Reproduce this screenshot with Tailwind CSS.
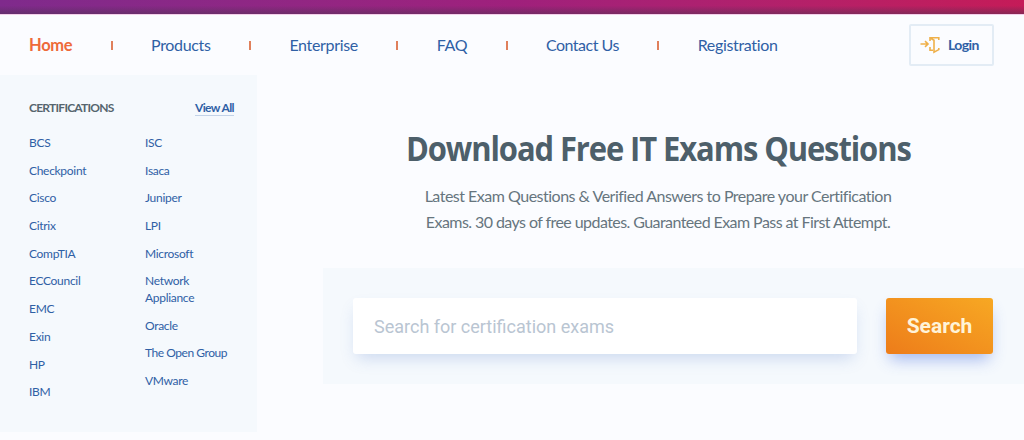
<!DOCTYPE html>
<html lang="en">
  <head>
    <meta charset="UTF-8" />
    <meta name="viewport" content="width=device-width, initial-scale=1.0" />
    <script src="https://cdn.jsdelivr.net/npm/@tailwindcss/browser@4"></script>
    <title>Download Free IT Exams Questions</title>
  </head>
  <body class="h-[440px] overflow-hidden bg-[#fbfcff] font-['Lato',sans-serif] text-[#2f60a5]">
    <div class="h-[14px] bg-linear-to-r from-[#7f2a8c] via-[#9f207c] to-[#c51b58]">
      <div class="h-full bg-linear-to-b from-transparent from-40% to-[#4a3350]/50"></div>
    </div>
    <header class="flex h-[61px] items-center justify-between border-t border-[#f3cfea] pr-[30px] pl-[29px]">
      <nav>
        <ul class="flex items-center gap-[38.4px] text-base tracking-[-0.33px] whitespace-nowrap">
          <li><a href="#" class="text-[16.5px] font-bold text-[#ee6a3a]">Home</a></li>
          <li class="h-[9px] w-[2px] bg-[#e0805c]"></li>
          <li><a href="#">Products</a></li>
          <li class="h-[9px] w-[2px] bg-[#e0805c]"></li>
          <li><a href="#">Enterprise</a></li>
          <li class="h-[9px] w-[2px] bg-[#e0805c]"></li>
          <li><a href="#">FAQ</a></li>
          <li class="h-[9px] w-[2px] bg-[#e0805c]"></li>
          <li><a href="#" class="tracking-[-0.5px]">Contact Us</a></li>
          <li class="h-[9px] w-[2px] bg-[#e0805c]"></li>
          <li><a href="#">Registration</a></li>
        </ul>
      </nav>
      <a href="#" class="mb-px flex h-[42px] w-[85px] items-center gap-2 rounded-[2px] border-2 border-[#e3ecf5] pl-[9px] text-sm font-bold tracking-[-0.6px]">
        <svg class="h-[18px] w-5" viewBox="0 0 20 18" fill="none" stroke="#efb04a" stroke-width="1.6">
          <path d="M0.5 8H7.5M5 5.2L8 8L5 10.8" />
          <path d="M10 5V1.8H18.8V4M10 11V14.2H13M11 2.5L14 4.2V16.2L18.8 13.6V12" />
        </svg>
        Login
      </a>
    </header>
    <div class="flex">
      <aside class="h-[357px] w-[257px] bg-[#f5f9fd] px-[29px] pt-[24px]">
        <div class="flex items-start justify-between">
          <h2 class="text-xs leading-[18px] font-bold tracking-[-0.75px] text-[#55656e]">CERTIFICATIONS</h2>
          <a href="#" class="-mr-[6px] mt-[2px] border-b border-[#c3d3e8] text-xs leading-[14px] font-bold tracking-[-0.6px]">View All</a>
        </div>
        <div class="mt-[18px] flex text-xs leading-[16.6px] tracking-[-0.3px]">
          <ul class="flex w-[116px] shrink-0 flex-col gap-[11.1px]">
            <li>BCS</li>
            <li>Checkpoint</li>
            <li>Cisco</li>
            <li>Citrix</li>
            <li>CompTIA</li>
            <li>ECCouncil</li>
            <li>EMC</li>
            <li>Exin</li>
            <li>HP</li>
            <li>IBM</li>
          </ul>
          <ul class="flex flex-col gap-[11.1px] whitespace-nowrap">
            <li>ISC</li>
            <li>Isaca</li>
            <li>Juniper</li>
            <li>LPI</li>
            <li>Microsoft</li>
            <li>Network<br />Appliance</li>
            <li>Oracle</li>
            <li class="tracking-[-0.45px]">The Open Group</li>
            <li>VMware</li>
          </ul>
        </div>
      </aside>
      <main class="ml-[66px] flex-1 pt-[50px]">
        <div class="flex w-[670px] flex-col items-center text-center">
          <h1 class="scale-x-91 font-['Open_Sans',sans-serif] text-[34px] leading-[46px] font-bold tracking-[-1.2px] whitespace-nowrap text-[#4d5f6a]">Download Free IT Exams Questions</h1>
          <p class="mt-[12px] text-base leading-[25.5px] tracking-[-0.5px] whitespace-nowrap text-[#66757e]">
            Latest Exam Questions &amp; Verified Answers to Prepare your Certification<br />
            <span class="tracking-[-0.57px]">Exams. 30 days of free updates. Guaranteed Exam Pass at First Attempt.</span>
          </p>
        </div>
        <form class="mt-[34px] flex h-[116px] items-center gap-[29px] bg-[#f5f9fd] pr-[31px] pl-[30px] font-['Roboto',sans-serif]">
          <input type="text" placeholder="Search for certification exams" class="h-14 w-[504px] rounded-[3px] bg-white px-[21px] text-lg shadow-[0_8px_16px_-4px_rgba(80,120,200,0.25)] placeholder:text-[#b9c5d2]" />
          <button type="button" class="h-14 w-[107px] rounded-[3px] bg-linear-to-tr from-[#ed7c1a] to-[#f7a823] pt-[2px] text-[21px] font-bold text-[#fff3d8] shadow-[0_9px_16px_-4px_rgba(60,100,220,0.45)]">Search</button>
        </form>
      </main>
    </div>
  </body>
</html>
